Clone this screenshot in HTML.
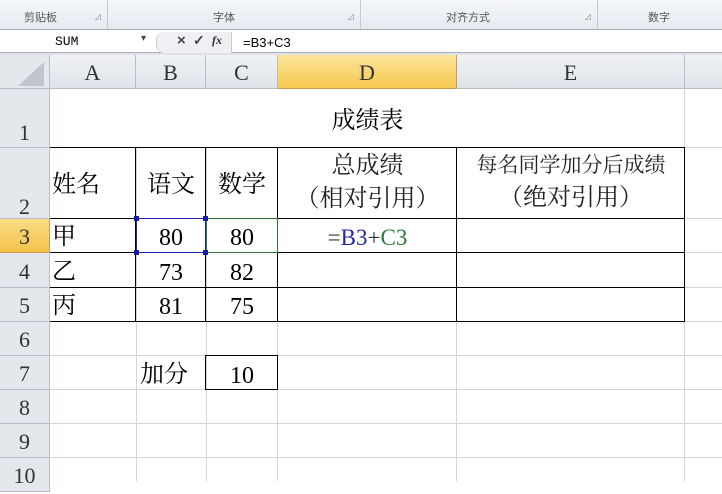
<!DOCTYPE html>
<html><head><meta charset="utf-8"><style>
body{margin:0;width:722px;height:481px;overflow:hidden;background:#fff;position:relative;font-family:"Liberation Serif","Noto Serif CJK SC",serif;}
div{position:absolute;box-sizing:border-box}
.rib{font-family:"Liberation Sans","Noto Sans CJK SC",sans-serif;font-size:11px;color:#555;top:9px}
.h{height:1px;background:#d4d4d4}
.v{width:1px;background:#d4d4d4}
.bh{height:1px;background:#000}
.bv{width:1px;background:#000}
.rn{left:0;width:50px;text-align:center;font-size:22px;color:#333;background:#e4e7ec;border-bottom:1px solid #b9bec6;border-right:1px solid #b9bec6}
.ch{top:55px;height:34px;text-align:center;font-size:22px;color:#333;line-height:36px;background:linear-gradient(#f0f2f5,#dfe3e8);border-right:1px solid #b9bec6;border-bottom:1px solid #b9bec6}
.t{font-size:24px;color:#000;text-align:center;line-height:28px;height:28px;white-space:nowrap}
</style></head><body>
<!-- ribbon -->
<div style="left:0;top:0;width:722px;height:30px;background:linear-gradient(#f4f6f9,#e6eaf0);border-bottom:1px solid #a8afb9"></div>
<div style="left:107px;top:0;width:1px;height:29px;background:#c5cbd3"></div>
<div style="left:360px;top:0;width:1px;height:29px;background:#c5cbd3"></div>
<div style="left:597px;top:0;width:1px;height:29px;background:#c5cbd3"></div>
<div class="rib" style="left:24px">剪贴板</div>
<div class="rib" style="left:213px">字体</div>
<div class="rib" style="left:446px">对齐方式</div>
<div class="rib" style="left:648px">数字</div>
<div class="rib" style="left:94px;top:12px;font-size:8px;color:#999">⊿</div>
<div class="rib" style="left:347px;top:12px;font-size:8px;color:#999">⊿</div>
<div class="rib" style="left:584px;top:12px;font-size:8px;color:#999">⊿</div>
<!-- formula bar -->
<div style="left:0;top:31px;width:722px;height:22px;background:#fff;border-bottom:1px solid #a8afb9"></div>
<div style="left:0;top:53px;width:722px;height:2px;background:#dfe3e8"></div>
<div style="left:55px;top:34px;font-family:'Liberation Mono',monospace;font-size:13px">SUM</div>
<div style="left:141px;top:33px;font-size:10px;color:#444">▾</div>
<div style="left:156px;top:32px;width:76px;height:21px;background:#eef0f3;border-left:1px solid #c5cbd3;border-right:1px solid #c5cbd3;border-radius:8px 0 0 8px"></div>
<div style="left:177px;top:32px;font-family:'Liberation Sans';font-size:15px;font-weight:bold;color:#444">×</div>
<div style="left:193px;top:32px;font-family:'Liberation Sans';font-size:14px;font-weight:bold;color:#444">✓</div>
<div style="left:212px;top:33px;font-size:12px;font-style:italic;font-weight:bold;color:#333">fx</div>
<div style="left:243px;top:35px;font-family:'Liberation Sans';font-size:13px">=B3+C3</div>
<!-- gridlines -->
<div class="v" style="left:136px;top:89px;height:392px"></div>
<div class="v" style="left:206px;top:89px;height:392px"></div>
<div class="v" style="left:277px;top:89px;height:392px"></div>
<div class="v" style="left:456px;top:89px;height:392px"></div>
<div class="v" style="left:684px;top:89px;height:392px"></div>
<div class="h" style="left:50px;top:355px;width:672px"></div>
<div class="h" style="left:50px;top:389px;width:672px"></div>
<div class="h" style="left:50px;top:423px;width:672px"></div>
<div class="h" style="left:50px;top:457px;width:672px"></div>
<div class="h" style="left:684px;top:147px;width:38px"></div>
<div class="h" style="left:684px;top:218px;width:38px"></div>
<div class="h" style="left:684px;top:252px;width:38px"></div>
<div class="h" style="left:684px;top:287px;width:38px"></div>
<div class="h" style="left:50px;top:321px;width:672px"></div>
<div style="left:51px;top:89px;width:633px;height:58px;background:#fff"></div>
<!-- black borders -->
<div class="bh" style="left:50px;top:147px;width:635px"></div>
<div class="bh" style="left:50px;top:218px;width:635px"></div>
<div class="bh" style="left:50px;top:252px;width:635px"></div>
<div class="bh" style="left:50px;top:287px;width:635px"></div>
<div class="bh" style="left:50px;top:321px;width:635px"></div>
<div class="bv" style="left:135px;top:147px;height:175px"></div>
<div class="bv" style="left:205px;top:147px;height:175px"></div>
<div class="bv" style="left:277px;top:147px;height:175px"></div>
<div class="bv" style="left:456px;top:147px;height:175px"></div>
<div class="bv" style="left:684px;top:147px;height:175px"></div>
<div style="left:205px;top:355px;width:73px;height:35px;border:1px solid #000"></div>
<!-- copy ranges -->
<div style="left:136px;top:218px;width:70px;height:35px;border:1px solid #2222bb"></div>
<div style="left:206px;top:218px;width:72px;height:35px;border:1px solid #2f7a3a"></div>
<div style="left:134px;top:216px;width:5px;height:5px;background:#1a1aa8"></div>
<div style="left:203px;top:216px;width:5px;height:5px;background:#1a1aa8"></div>
<div style="left:134px;top:250px;width:5px;height:5px;background:#1a1aa8"></div>
<div style="left:203px;top:250px;width:5px;height:5px;background:#1a1aa8"></div>
<!-- headers -->
<div style="left:0;top:55px;width:50px;height:34px;background:#e4e7ec;border-right:1px solid #b9bec6;border-bottom:1px solid #b9bec6"></div>
<div style="left:18px;top:62px;width:0;height:0;border-left:26px solid transparent;border-bottom:24px solid #c2c6cc"></div>
<div class="ch" style="left:50px;width:86px">A</div>
<div class="ch" style="left:136px;width:70px">B</div>
<div class="ch" style="left:206px;width:72px">C</div>
<div class="ch" style="left:278px;width:179px;background:linear-gradient(#fde49a,#f6c94f);border-color:#c9a04a">D</div>
<div class="ch" style="left:457px;width:228px">E</div>
<div class="ch" style="left:685px;width:37px;border-right:none"></div>
<div class="rn" style="top:89px;height:59px;line-height:88px">1</div>
<div class="rn" style="top:148px;height:71px;line-height:118px">2</div>
<div class="rn" style="top:219px;height:34px;line-height:36px;background:linear-gradient(#fbdc85,#f3c24c);border-color:#c9a04a">3</div>
<div class="rn" style="top:253px;height:35px;line-height:37px">4</div>
<div class="rn" style="top:288px;height:34px;line-height:36px">5</div>
<div class="rn" style="top:322px;height:34px;line-height:36px">6</div>
<div class="rn" style="top:356px;height:34px;line-height:36px">7</div>
<div class="rn" style="top:390px;height:34px;line-height:36px">8</div>
<div class="rn" style="top:424px;height:34px;line-height:36px">9</div>
<div class="rn" style="top:458px;height:34px;line-height:36px">10</div>
<!-- content -->
<div class="t" style="left:50px;top:107px;width:635px">成绩表</div>
<div class="t" style="left:52px;top:171px;text-align:left">姓名</div>
<div class="t" style="left:136px;top:171px;width:70px">语文</div>
<div class="t" style="left:206px;top:171px;width:72px">数学</div>
<div class="t" style="left:278px;top:150px;width:179px;height:66px;line-height:33px;color:#222">总成绩<br>（相对引用）</div>
<div class="t" style="left:457px;top:149px;width:228px;height:66px;font-size:21px;line-height:33px;color:#222">每名同学加分后成绩<br><span style="font-size:24px">（绝对引用）</span></div>
<div class="t" style="left:52px;top:223px;text-align:left">甲</div>
<div class="t" style="left:52px;top:258px;text-align:left">乙</div>
<div class="t" style="left:52px;top:292px;text-align:left">丙</div>
<div class="t" style="left:136px;top:224px;width:70px">80</div>
<div class="t" style="left:206px;top:224px;width:72px">80</div>
<div class="t" style="left:136px;top:259px;width:70px">73</div>
<div class="t" style="left:206px;top:259px;width:72px">82</div>
<div class="t" style="left:136px;top:293px;width:70px">81</div>
<div class="t" style="left:206px;top:293px;width:72px">75</div>
<div class="t" style="left:278px;top:224px;width:179px;font-size:23px"><span style="color:#333">=</span><span style="color:#2626a8">B3</span><span style="color:#333">+</span><span style="color:#2a7a36">C3</span></div>
<div class="t" style="left:140px;top:361px;text-align:left">加分</div>
<div class="t" style="left:206px;top:362px;width:72px">10</div>
</body></html>
